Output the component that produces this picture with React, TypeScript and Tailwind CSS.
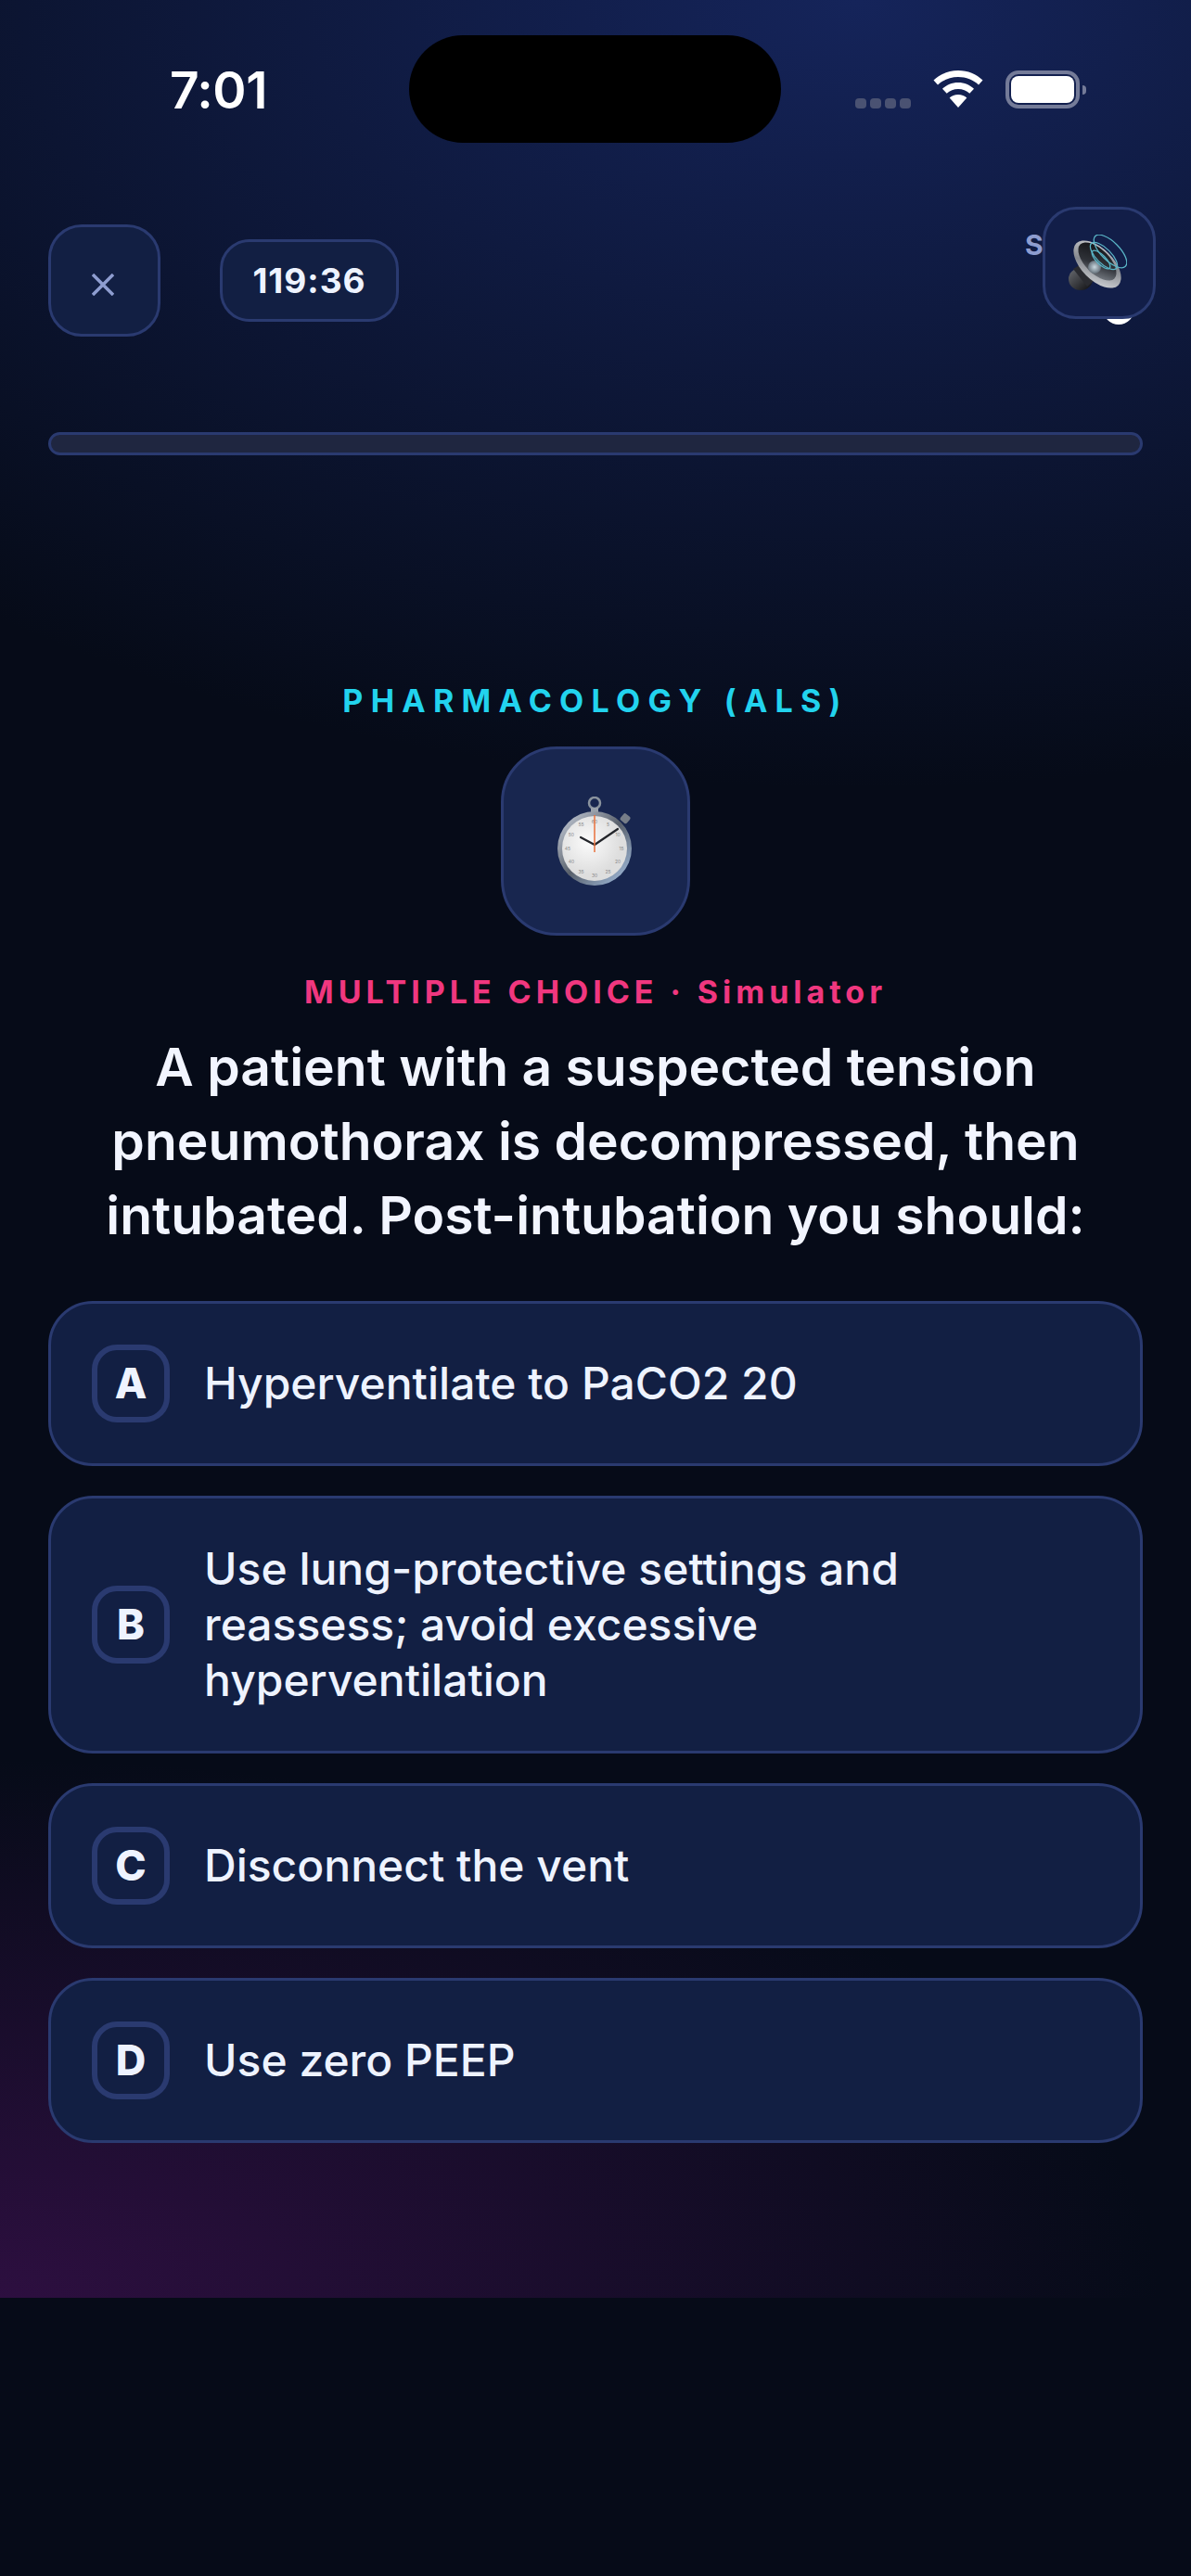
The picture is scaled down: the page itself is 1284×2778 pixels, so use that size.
import React from 'react';

const options = [
  { key: 'A', text: 'Hyperventilate to PaCO2 20' },
  { key: 'B', text: 'Use lung-protective settings and reassess; avoid excessive hyperventilation' },
  { key: 'C', text: 'Disconnect the vent' },
  { key: 'D', text: 'Use zero PEEP' },
];

function Wifi() {
  return (
    <svg width="54" height="40" viewBox="0 0 54 40" fill="#fff">
      <path d="M27 0C16.500 0 7.500 4 0.500 10.500L5 15.500C10.500 10.200 18.500 7 27 7s16.500 3.200 22 8.500l4.500-5C46.500 4 37.500 0 27 0z" />
      <path d="M27 13c-6.800 0-12.500 2.500-17 6.800l4.700 5C18 21.700 22.300 20 27 20s9 1.700 12.300 4.800l4.700-5C39.500 15.500 33.800 13 27 13z" />
      <path d="M27 26c-3.800 0-6.900 1.300-9.300 3.500L27 40l9.300-10.500C33.900 27.300 30.800 26 27 26z" />
    </svg>
  );
}

function Battery() {
  return (
    <div className="flex items-center gap-[3px]">
      <div className="w-[80px] h-[41px] rounded-[14px] border-[4px] border-[#747b98] p-[2px]">
        <div className="w-full h-full rounded-[8px] bg-white" />
      </div>
      <div className="w-[4px] h-[10px] rounded-r-full bg-[#747b98]" />
    </div>
  );
}

function Speaker() {
  return (
    <svg width="65" height="63" viewBox="0 0 65 63" fill="none" className="mt-[2px] mr-[5px]">
      <defs>
        <linearGradient id="cone" x1="0" y1="0" x2="1" y2="1">
          <stop offset="0" stopColor="#0e0e11" />
          <stop offset="0.55" stopColor="#2f3238" />
          <stop offset="1" stopColor="#8d939b" />
        </linearGradient>
        <linearGradient id="rim" x1="0" y1="0" x2="1" y2="1">
          <stop offset="0" stopColor="#d8dadd" />
          <stop offset="0.5" stopColor="#85888e" />
          <stop offset="1" stopColor="#e2e4e7" />
        </linearGradient>
        <linearGradient id="magnet" x1="0" y1="0" x2="1" y2="1">
          <stop offset="0" stopColor="#6a6d73" />
          <stop offset="1" stopColor="#0c0c0e" />
        </linearGradient>
        <radialGradient id="dome">
          <stop offset="0" stopColor="#c9d8e0" />
          <stop offset="1" stopColor="#66717b" />
        </radialGradient>
      </defs>
      <ellipse cx="15" cy="48" rx="13" ry="12" fill="url(#magnet)" />
      <path d="M7 37L22 28L34 46L22 56z" fill="#2a2b30" />
      <ellipse cx="33" cy="32" rx="32" ry="17" transform="rotate(45 33 32)" fill="url(#rim)" />
      <ellipse cx="33" cy="29" rx="26" ry="13" transform="rotate(45 33 29)" fill="url(#cone)" />
      <circle cx="30" cy="35" r="7" fill="url(#dome)" />
      <ellipse cx="47" cy="18" rx="23" ry="10" transform="rotate(45 47 18)" stroke="#59b4c6" strokeWidth="1.300" />
      <ellipse cx="40" cy="23" rx="19" ry="8" transform="rotate(45 40 23)" stroke="#59b4c6" strokeWidth="1.300" />
      <ellipse cx="37" cy="27" rx="13" ry="5" transform="rotate(45 37 27)" stroke="#59b4c6" strokeWidth="1.300" />
    </svg>
  );
}

const dialNumbers = ['60', '5', '10', '15', '20', '25', '30', '35', '40', '45', '50', '55'];

function Stopwatch() {
  return (
    <svg width="82" height="96" viewBox="0 0 82 96" fill="none">
      <defs>
        <linearGradient id="case" x1="0" y1="0" x2="1" y2="1">
          <stop offset="0" stopColor="#cfd6e2" />
          <stop offset="0.5" stopColor="#59606b" />
          <stop offset="1" stopColor="#a9c6ea" />
        </linearGradient>
        <radialGradient id="face" cx="0.4" cy="0.4">
          <stop offset="0" stopColor="#fbfbfb" />
          <stop offset="1" stopColor="#dedede" />
        </radialGradient>
      </defs>
      <circle cx="40" cy="7" r="6" stroke="#8a939e" strokeWidth="2.500" />
      <rect x="36" y="12" width="8" height="5" fill="#9aa2ac" />
      <rect x="69" y="19" width="9" height="9" rx="2" transform="rotate(40 73 23)" fill="#767d88" />
      <circle cx="40" cy="56" r="40" fill="url(#case)" />
      <circle cx="40" cy="56" r="35" fill="url(#face)" />
      {dialNumbers.map((n, i) => {
        const a = (i * Math.PI) / 6;
        return (
          <text key={n} x={40 + Math.sin(a) * 29} y={57.500 - Math.cos(a) * 29} fontSize="5" fill="#8a8a8a" textAnchor="middle" fontFamily="Inter">
            {n}
          </text>
        );
      })}
      <path d="M40 52L25 44M40 52L65 35" stroke="#23252a" strokeWidth="2.200" strokeLinecap="round" />
      <path d="M40 20V60" stroke="#e8703c" strokeWidth="1.500" />
    </svg>
  );
}

function OptionRow({ letter, text }: { letter: string; text: string }) {
  return (
    <div className="flex items-center min-h-[178px] px-[44px] rounded-[48px] border-[3px] border-[#2a3a70] bg-[#121f43]">
      <div className="w-[84px] h-[84px] shrink-0 flex items-center justify-center rounded-[27px] border-[6px] border-[#2a3a70] text-[45px] font-extrabold text-[#eef3ff]">
        {letter}
      </div>
      <div className="ml-[37px] py-[46px] text-[48px] leading-[60px] font-medium text-[#eef3ff]">{text}</div>
    </div>
  );
}

export default function App() {
  return (
    <div className="min-h-[2778px] bg-[#060b18] font-['Inter',_sans-serif]">
      <div className="relative h-[2478px] px-[52px] bg-[radial-gradient(1500px_850px_at_72%_0%,#15245a_0%,rgba(21,36,90,0)_100%),radial-gradient(1250px_580px_at_0%_100%,#2d0f40_0%,rgba(45,15,64,0)_100%)]">
        {/* Status bar */}
        <div className="flex items-start h-[154px] pt-[38px]">
          <div className="w-[389px] pl-[131px] pt-[25px] text-[55px] leading-[68px] font-semibold tracking-[-0.5px] text-white">7:01</div>
          <div className="w-[401px] h-[116px] rounded-[58px] bg-black" />
          <div className="flex items-start ml-[80px] mt-[38px] gap-[24px]">
            <div className="flex gap-[4px] mt-[30px]">
              {[0, 1, 2, 3].map((i) => (
                <div key={i} className="w-[12px] h-[11px] rounded-[4px] bg-[#4a5272]" />
              ))}
            </div>
            <Wifi />
            <Battery />
          </div>
        </div>

        {/* Header */}
        <div className="flex items-start pt-[88px] gap-[64px]">
          <div className="w-[121px] h-[121px] flex items-center justify-center rounded-[36px] border-[3px] border-[#2a3a70] bg-[#121f43] text-[#8e9dd0]">
            <svg width="24" height="24" viewBox="0 0 24 24" stroke="currentColor" strokeWidth="3.500" className="mt-[8px] mr-[3px]">
              <path d="M1 1L23 23M23 1L1 23" />
            </svg>
          </div>
          <div className="mt-[16px] w-[193px] h-[89px] flex items-center justify-center rounded-[32px] border-[3px] border-[#2a3a70] bg-[#121f43] text-[37px] font-bold tracking-[1px] text-[#eef3ff]">
            119:36
          </div>
        </div>
        <div className="absolute left-[1105px] top-[242px] text-[30px] font-bold text-[#8e9dd0]">S</div>
        <div className="absolute left-[1189px] top-[316px] w-[34px] h-[34px] rounded-full bg-white" />
        <div className="absolute left-[1124px] top-[223px] w-[122px] h-[121px] flex items-center justify-center rounded-[36px] border-[3px] border-[#2a3a70] bg-[#121e48]">
          <Speaker />
        </div>

        {/* Progress */}
        <div className="mt-[103px] h-[25px] rounded-full border-[3px] border-[#2a3a70] bg-[#1f2640]" />

        {/* Question */}
        <div className="flex flex-col items-center mt-[245px]">
          <div className="text-[34px] leading-[40px] font-bold tracking-[0.243em] text-[#22d3ee]">PHARMACOLOGY (ALS)</div>
          <div className="mt-[29px] w-[204px] h-[204px] flex items-center justify-center rounded-[60px] border-[3px] border-[#2a3a70] bg-[#18264f]">
            <Stopwatch />
          </div>
          <div className="mt-[41px] text-[34px] leading-[40px] font-bold tracking-[0.146em] text-[#f0377f]">MULTIPLE CHOICE · Simulator</div>
          <div className="mt-[21px] text-center text-[57px] leading-[80px] font-semibold text-[#f2f5ff] whitespace-pre-line">
            {'A patient with a suspected tension\npneumothorax is decompressed, then\nintubated. Post-intubation you should:'}
          </div>
        </div>

        {/* Answers */}
        <div className="flex flex-col gap-[32px] mt-[52px]">
          {options.map((o) => (
            <OptionRow key={o.key} letter={o.key} text={o.text} />
          ))}
        </div>
      </div>
    </div>
  );
}
